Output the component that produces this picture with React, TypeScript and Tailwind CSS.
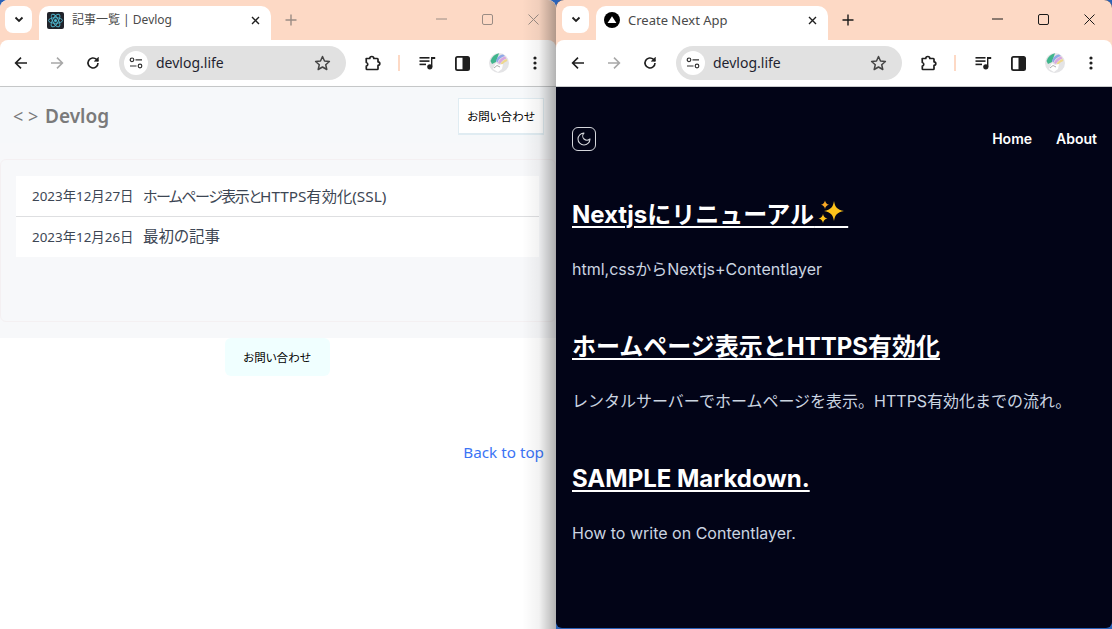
import React from "react";

const ui = "font-['Noto_Sans','Noto_Sans_CJK_JP',sans-serif]";
const inter = "font-['Inter','Noto_Sans_CJK_JP',sans-serif]";
const palt = "[font-feature-settings:'palt']";

function ReactFav() {
  return (
    <svg width="17" height="17" viewBox="0 0 17 17" className="shrink-0">
      <rect width="17" height="17" rx="2" fill="#20232a" />
      <g fill="none" stroke="#4fb8d0" strokeWidth="0.9">
        <ellipse cx="8.5" cy="8.5" rx="7" ry="2.8" />
        <ellipse cx="8.5" cy="8.5" rx="7" ry="2.8" transform="rotate(60 8.5 8.5)" />
        <ellipse cx="8.5" cy="8.5" rx="7" ry="2.8" transform="rotate(120 8.5 8.5)" />
      </g>
      <circle cx="8.5" cy="8.5" r="1.5" fill="#4fb8d0" />
    </svg>
  );
}

function NextFav() {
  return (
    <svg width="16" height="16" viewBox="0 0 16 16" className="shrink-0">
      <circle cx="8" cy="8" r="8" fill="#000" />
      <path d="M8 4.2 12.4 11H3.6Z" fill="#fff" />
    </svg>
  );
}

function Chevron() {
  return (
    <svg width="10" height="7" viewBox="0 0 10 7" fill="none" stroke="#1f1f1f" strokeWidth="1.8">
      <path d="M1.5 1.5 5 5 8.5 1.5" />
    </svg>
  );
}

function CloseX() {
  return (
    <svg width="9" height="9" viewBox="0 0 9 9" fill="none" stroke="#1f1f1f" strokeWidth="1.4" className="shrink-0">
      <path d="M1 1 8 8M8 1 1 8" />
    </svg>
  );
}

function Arrow({ dir, color }: { dir: "l" | "r"; color: string }) {
  return (
    <svg width="14" height="14" viewBox="0 0 14 14" fill="none" stroke={color} strokeWidth="1.6" className={dir === "r" ? "rotate-180" : ""}>
      <path d="M13 7H2M7 1.6 1.6 7 7 12.4" />
    </svg>
  );
}

function Reload() {
  return (
    <svg width="14" height="14" viewBox="0 0 14 14" fill="none" stroke="#1f1f1f" strokeWidth="1.6">
      <path d="M12 7a5 5 0 1 1-1.5-3.6L12 4.8" />
      <path d="M12.4 1v4.3H8.1" fill="#1f1f1f" strokeWidth="0.6" />
    </svg>
  );
}

function Tune() {
  return (
    <svg width="14" height="12" viewBox="0 0 14 12" fill="none" stroke="#333" strokeWidth="1.2">
      <circle cx="3" cy="2.8" r="1.8" />
      <path d="M6.5 2.8H13" />
      <path d="M1 9h6.5" />
      <circle cx="11" cy="9" r="1.8" />
    </svg>
  );
}

function Star() {
  return (
    <svg width="17" height="16" viewBox="0 0 17 16" fill="none" stroke="#444" strokeWidth="1.5" strokeLinejoin="round">
      <path d="M8.5 1.5 10.5 6l4.9.5-3.7 3.2 1.1 4.8-4.3-2.5-4.3 2.5 1.1-4.8L1.6 6.5 6.5 6Z" />
    </svg>
  );
}

function Puzzle() {
  return (
    <svg width="17" height="17" viewBox="0 0 17 17" fill="none" stroke="#1f1f1f" strokeWidth="1.7" strokeLinejoin="round">
      <path d="M2.2 3.5h3.6a2 2 0 0 1 4 0h3.5a.7.7 0 0 1 .7.7v2.6a1.8 1.8 0 0 1 0 3.6v3.4a.7.7 0 0 1-.7.7H3a.7.7 0 0 1-.7-.7v-2.6a1.9 1.9 0 0 0 0-3.7Z" />
    </svg>
  );
}

function Music() {
  return (
    <svg width="17" height="14" viewBox="0 0 17 14" fill="#1f1f1f">
      <rect x="0.5" y="1" width="10" height="1.6" />
      <rect x="0.5" y="4.3" width="10" height="1.6" />
      <rect x="0.5" y="7.6" width="6.5" height="1.6" />
      <circle cx="10.8" cy="10.8" r="2.6" />
      <path d="M12 10.8V1h4.2v2H13.4v7.8Z" />
    </svg>
  );
}

function SidePanel() {
  return (
    <svg width="15" height="15" viewBox="0 0 15 15">
      <rect x="0.9" y="0.9" width="13.2" height="13.2" rx="1.6" fill="#fff" stroke="#1f1f1f" strokeWidth="1.8" />
      <rect x="7.5" y="1" width="6.5" height="13" fill="#1f1f1f" />
    </svg>
  );
}

function Avatar() {
  return (
    <svg width="20" height="20" viewBox="0 0 20 20">
      <circle cx="10" cy="10" r="10" fill="#e4e4e6" />
      <path d="M1.5 8C3 3.5 6 1 10 .2L7 9 3 11Z" fill="#3fb58c" />
      <path d="M7 8c1-3 3-6 7-6.5l2 1.5C12 4 9.500 6.500 8.500 9.500Z" fill="#8fa8e8" />
      <path d="M9 10c1-3 3.500-5.500 7-6.500l1.500 2C14 6.500 12 9 11 11Z" fill="#d9a7de" />
      <path d="M11.500 11c.7-2 2.800-4 6-5l1 2c-2.500.7-4 2-5 3.500Z" fill="#efd78c" />
      <path d="M4 16l3-6 3 2 4-1-1 5-4 3Z" fill="#fff" />
      <path d="M5 15l3-2.500 3 1.500" stroke="#8a8a8a" strokeWidth="0.7" fill="none" />
    </svg>
  );
}

function Kebab() {
  return (
    <svg width="4" height="14" viewBox="0 0 4 14" fill="#1f1f1f">
      <circle cx="2" cy="2" r="1.6" />
      <circle cx="2" cy="7" r="1.6" />
      <circle cx="2" cy="12" r="1.6" />
    </svg>
  );
}

function WindowControls({ color }: { color: string }) {
  return (
    <div className="ml-auto flex h-[40px] items-start" style={{ color }}>
      <div className="flex h-[38px] w-[46px] items-center justify-center">
        <svg width="11" height="2" viewBox="0 0 11 2"><path d="M0 1h11" stroke="currentColor" /></svg>
      </div>
      <div className="flex h-[38px] w-[46px] items-center justify-center">
        <svg width="11" height="11" viewBox="0 0 11 11" fill="none"><rect x="0.5" y="0.5" width="10" height="10" rx="1.5" stroke="currentColor" /></svg>
      </div>
      <div className="flex h-[38px] w-[46px] items-center justify-center">
        <svg width="11" height="11" viewBox="0 0 11 11" fill="none"><path d="M.5.5l10 10M10.500.5l-10 10" stroke="currentColor" /></svg>
      </div>
    </div>
  );
}

function Chrome({
  active,
  title,
  fav,
}: {
  active: boolean;
  title: string;
  fav: React.ReactNode;
}) {
  const ctl = active ? "#1a1a1a" : "#9a8c84";
  return (
    <div className={`${ui} shrink-0 bg-[#fdd9c5]`}>
      <div className="flex h-[40px] items-start">
        <div className={`mt-[6px] flex h-[27px] w-[27px] items-center justify-center rounded-lg bg-white ${active ? "ml-[6px]" : "ml-[5px]"}`}>
          <Chevron />
        </div>
        <div className="ml-[7px] mt-[6px] flex h-[34px] w-[232px] items-center rounded-t-[10px] bg-white pb-[6px] pl-[8px] pr-[11px]">
          {fav}
          <span className={`ml-[8px] whitespace-nowrap leading-[16px] text-[#4a4a4a] ${active ? "text-[13px]" : "text-[12px]"}`}>{title}</span>
          <span className="ml-auto"><CloseX /></span>
        </div>
        <svg width="12" height="12" viewBox="0 0 12 12" className="ml-[14px] mt-[14px]" fill="none" stroke={active ? "#1a1a1a" : "#9a8c84"} strokeWidth="1.4">
          <path d="M6 .5v11M.5 6h11" />
        </svg>
        <WindowControls color={ctl} />
      </div>
      <div className="flex h-[47px] items-center rounded-t-[8px] border-b border-[#c9cbcc] bg-white">
        <div className={`flex w-[14px] justify-center ${active ? "ml-[15px]" : "ml-[14px]"}`}><Arrow dir="l" color="#1f1f1f" /></div>
        <div className="ml-[22px] flex w-[14px] justify-center"><Arrow dir="r" color="#a8a8a8" /></div>
        <div className="ml-[22px] flex w-[14px] justify-center"><Reload /></div>
        <div className={`flex h-[34px] items-center rounded-full bg-[#e1e1e1] pl-[5px] pr-[15px] ${active ? "ml-[19px] w-[226px]" : "ml-[19px] w-[227px]"}`}>
          <div className="flex h-[24px] w-[24px] items-center justify-center rounded-full bg-white"><Tune /></div>
          <span className="ml-[8px] text-[14px] leading-none text-[#1f1f2f]">devlog.life</span>
          <span className="ml-auto"><Star /></span>
        </div>
        <div className="ml-[18px]"><Puzzle /></div>
        <div className="ml-[17px] h-[16px] w-[2px] bg-[#fdd9c5]" />
        <div className="ml-[19px]"><Music /></div>
        <div className="ml-[19px]"><SidePanel /></div>
        <div className="ml-[19px]"><Avatar /></div>
        <div className="ml-[24px]"><Kebab /></div>
      </div>
    </div>
  );
}

function Sparkle() {
  return (
    <span className="relative">
      {"\u00a0\u00a0\u00a0\u00a0\u00a0\u00a0"}
      <svg width="28" height="26" viewBox="0 0 28 26" className="absolute left-[3px] top-[-1px]">
        <path d="M17 2c1 6 3 8.500 10 10-7 1.500-9 4-10 10-1-6-3-8.500-10-10 7-1.500 9-4 10-10Z" fill="#fcc21b" />
        <path d="M8 1.500c.5 2.400 1.700 3.600 4 4.200-2.300.6-3.500 1.800-4 4.200-.5-2.400-1.700-3.600-4-4.200 2.300-.6 3.500-1.800 4-4.200Z" fill="#f9a825" />
        <path d="M6 15c.6 2.800 1.800 4 4.500 4.500C7.800 20 6.600 21.200 6 24c-.6-2.800-1.800-4-4.500-4.500C4.200 19 5.400 17.800 6 15Z" fill="#fcc21b" />
      </svg>
    </span>
  );
}

function Post({ title, text, sparkle }: { title: string; text: string; sparkle?: boolean }) {
  return (
    <section className="mb-[50px]">
      <h2 className="text-[24px] font-bold leading-[32px] text-white underline underline-offset-[3px] decoration-2">
        {title}
        {sparkle && <Sparkle />}
      </h2>
      <p className="mt-[26px] text-[16px] leading-[24px] text-[#cbd5e1]">{text}</p>
    </section>
  );
}

function Row({ date, children, line }: { date: string; children: React.ReactNode; line?: boolean }) {
  return (
    <div className={`flex h-[40px] items-center pl-[16px] ${palt} ${line ? "border-b border-[#dedfe1] box-content" : ""}`}>
      <span className="w-[111px] shrink-0 text-[13.4px] text-[#3d4654]">{date}</span>
      <span className="text-[15.3px] text-[#3d4654]">{children}</span>
    </div>
  );
}

export default function App() {
  return (
    <div className="flex h-[629px] w-[1112px] overflow-hidden bg-[#2a62b8]">
      <div className="relative flex h-[629px] w-[556px] shrink-0 flex-col overflow-hidden rounded-t-[8px] bg-white">
        <Chrome active={false} title="記事一覧 | Devlog" fav={<ReactFav />} />
        <div className={`${ui} flex min-h-0 flex-1 flex-col`}>
          <header className="flex h-[56px] shrink-0 items-center justify-between bg-[#f6f8fa] pl-[13px] pr-[12px] pt-[2px] shadow-[0_1px_3px_rgba(0,0,0,0.12)]">
            <span className="flex items-baseline text-[#7a7a7a]">
              <span className="w-[32px] text-[18px]">&lt; &gt;</span>
              <span className="text-[19px] font-semibold">Devlog</span>
            </span>
            <button className={`h-[37px] w-[86px] border border-b-2 border-[#e0ecf2] bg-white pt-[3px] text-[11.5px] text-black ${palt}`}>お問い合わせ</button>
          </header>
          <main className="h-[195px] shrink-0 bg-[#f7f8fa] pt-[16px]">
            <div className="h-[163px] rounded-[6px] border border-[#f4f0f2] px-[15px] pt-[16px]">
              <div className="w-[523px] bg-white">
                <Row date="2023年12月27日" line>
                  <span className="text-[15px] tracking-[-1.5px]">ホームページ表示と</span>HTTPS有効化(SSL)
                </Row>
                <Row date="2023年12月26日">
                  <span className="text-[15.5px]">最初の記事</span>
                </Row>
              </div>
            </div>
          </main>
          <div className="flex justify-center pr-[2px]">
            <button className={`h-[38px] w-[105px] rounded-[6px] bg-[#f0ffff] pt-[1px] text-[11.5px] text-black ${palt}`}>お問い合わせ</button>
          </div>
          <div className="mt-[64px] pr-[12px] text-right">
            <a className="text-[15.25px] leading-[24px] text-[#3b74f5]">Back to top</a>
          </div>
        </div>
        <div className="absolute inset-y-0 right-0 w-[34px] bg-gradient-to-l from-black/30 via-black/5 to-transparent" />
      </div>
      <div className="flex h-[628px] w-[556px] shrink-0 flex-col overflow-hidden rounded-t-[8px] rounded-b-[6px] bg-[#020417]">
        <Chrome active title="Create Next App" fav={<NextFav />} />
        <div className={`${inter} min-h-0 flex-1 px-[16px]`}>
          <nav className="mt-[40px] flex h-[24px] items-center justify-between">
            <div className="flex h-[24px] w-[24px] items-center justify-center rounded-md border border-[#d5d7dc]">
              <svg width="16" height="16" viewBox="0 0 24 24" fill="none" stroke="#d5d7dc" strokeWidth="1.6" strokeLinecap="round" strokeLinejoin="round">
                <path d="M12 3a6 6 0 0 0 9 9 9 9 0 1 1-9-9Z" />
              </svg>
            </div>
            <div className="-mr-px -mt-[2px] flex gap-[24px] text-[14px] font-semibold text-white">
              <a>Home</a>
              <a>About</a>
            </div>
          </nav>
          <div className="mt-[48px]">
            <Post title="Nextjsにリニューアル" text="html,cssからNextjs+Contentlayer" sparkle />
            <Post title="ホームページ表示とHTTPS有効化" text="レンタルサーバーでホームページを表示。HTTPS有効化までの流れ。" />
            <Post title="SAMPLE Markdown." text="How to write on Contentlayer." />
          </div>
        </div>
      </div>
    </div>
  );
}
